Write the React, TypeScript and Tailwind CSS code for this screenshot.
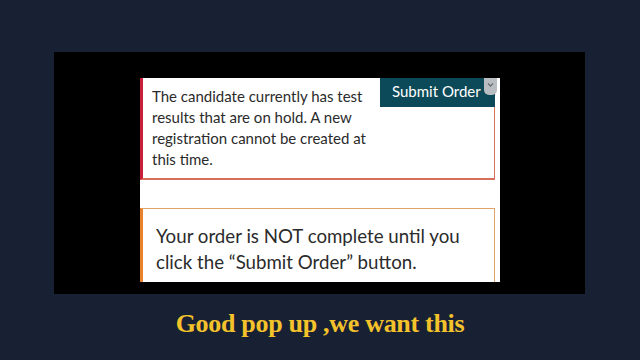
export default function App() {
  return (
    <main className="flex h-[360px] w-[640px] flex-col overflow-hidden bg-[#182033]">
      {/* Video frame */}
      <div className="ml-[54px] mt-[52px] h-[242px] w-[531px] bg-black pl-[86px] pt-[26px]">
        <div
          className="relative flex h-[204px] w-[360px] flex-col bg-white pr-[5px]"
          style={{ fontFamily: "Lato, 'Open Sans', sans-serif" }}
        >
          {/* Error alert */}
          <div className="h-[102px] border-b-[2px] border-l-[3px] border-r border-b-[#d7705a] border-l-[#c8203a] border-r-[#d7705a] pl-[9px] pt-[8px]">
            <p className="w-[224px] text-[15px] leading-[21px] text-[#2b2b2b]">
              The candidate currently has test results that are on hold. A new registration cannot be created at this
              time.
            </p>
          </div>

          {/* Submit button overlay */}
          <div className="absolute right-[5px] top-0 flex h-[29px] w-[115px] items-start bg-[#0d4a59] pl-[12px] pt-[3px]">
            <span className="text-[15px] leading-[20px] text-white">Submit Order</span>
            <span className="absolute right-[-2px] top-0 flex h-[17px] w-[13px] items-start justify-center rounded-b-[5px] bg-[#b9bec3]">
              <svg width="7" height="6" viewBox="0 0 7 6" className="mt-[4px]">
                <path d="M1 1.5 L3.5 4 L6 1.5" fill="none" stroke="#6b7075" strokeWidth="1.3" />
              </svg>
            </span>
          </div>

          {/* Warning box */}
          <div className="mt-[28px] flex-1 border-l-[3px] border-r border-t border-l-[#e8822e] border-r-[#e0a46a] border-t-[#e0a46a] pl-[13px] pt-[14px]">
            <p className="text-[18.7px] leading-[26px] text-[#2b2b2b]">
              Your order is NOT complete until you click the “Submit Order” button.
            </p>
          </div>
        </div>
      </div>

      {/* Caption */}
      <p
        className="mt-[15px] text-center text-[26px] font-bold leading-[30px] tracking-[-0.3px] text-[#f4c22b]"
        style={{ fontFamily: "'Liberation Serif', 'DejaVu Serif', serif" }}
      >
        Good pop up ,we want this
      </p>
    </main>
  );
}
